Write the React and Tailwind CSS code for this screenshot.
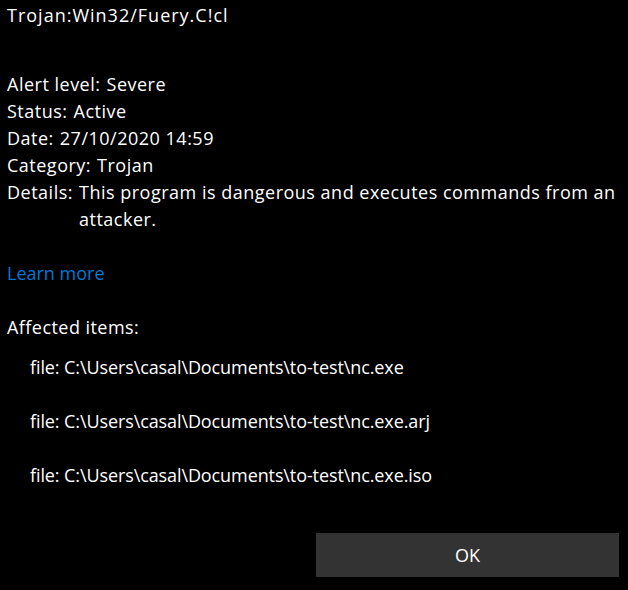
export default function App() {
  const fields = [
    ["Alert level:", "Severe"],
    ["Status:", "Active"],
    ["Date:", "27/10/2020 14:59"],
    ["Category:", "Trojan"],
    ["Details:", "This program is dangerous and executes commands from an attacker."],
  ];
  const files = [
    "file: C:\\Users\\casal\\Documents\\to-test\\nc.exe",
    "file: C:\\Users\\casal\\Documents\\to-test\\nc.exe.arj",
    "file: C:\\Users\\casal\\Documents\\to-test\\nc.exe.iso",
  ];

  return (
    <div className="w-[628px] h-[590px] bg-black text-white overflow-hidden font-['Open_Sans',sans-serif]">
      <div className="pl-[7px] pr-[6px] pt-[4px]">
        <div className="text-[18px] leading-[22px] tracking-[1px]">Trojan:Win32/Fuery.C!cl</div>

        <div className="mt-[45px] text-[18px] leading-[27px] tracking-[0.5px]">
          {fields.map(([label, value]) => (
            <div key={label} className="flex gap-[6px]">
              <span className="shrink-0">{label}</span>
              <span>{value}</span>
            </div>
          ))}
        </div>

        <div className="mt-[27px] text-[18px] leading-[27px]">
          <a href="#" className="text-[#0078d7]">Learn more</a>
        </div>

        <div className="mt-[27px] text-[18px] leading-[27px] tracking-[0.45px]">Affected items:</div>

        <div className="-mt-[1px] pl-[23px] text-[18px] leading-[54px] tracking-[-0.1px]">
          {files.map((f) => (
            <div key={f}>{f}</div>
          ))}
        </div>

        <div className="flex justify-end mt-[31px] pr-[3px]">
          <button className="w-[303px] h-[44px] bg-[#333333] text-[18px] text-white">OK</button>
        </div>
      </div>
    </div>
  );
}
